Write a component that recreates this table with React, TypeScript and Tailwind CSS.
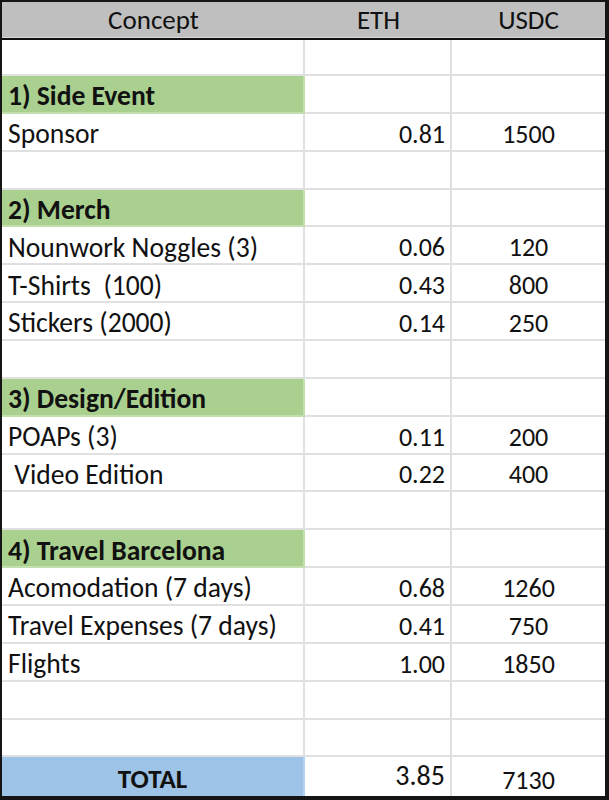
type Row =
  | { kind: "empty" }
  | { kind: "section"; label: string }
  | { kind: "item"; label: string; eth: string; usdc: string };

const rows: Row[] = [
  { kind: "empty" },
  { kind: "section", label: "1) Side Event" },
  { kind: "item", label: "Sponsor", eth: "0.81", usdc: "1500" },
  { kind: "empty" },
  { kind: "section", label: "2) Merch" },
  { kind: "item", label: "Nounwork Noggles (3)", eth: "0.06", usdc: "120" },
  { kind: "item", label: "T-Shirts  (100)", eth: "0.43", usdc: "800" },
  { kind: "item", label: "Stickers (2000)", eth: "0.14", usdc: "250" },
  { kind: "empty" },
  { kind: "section", label: "3) Design/Edition" },
  { kind: "item", label: "POAPs (3)", eth: "0.11", usdc: "200" },
  { kind: "item", label: " Video Edition", eth: "0.22", usdc: "400" },
  { kind: "empty" },
  { kind: "section", label: "4) Travel Barcelona" },
  { kind: "item", label: "Acomodation (7 days)", eth: "0.68", usdc: "1260" },
  { kind: "item", label: "Travel Expenses (7 days)", eth: "0.41", usdc: "750" },
  { kind: "item", label: "Flights", eth: "1.00", usdc: "1850" },
  { kind: "empty" },
  { kind: "empty" },
];

const font = { fontFamily: "Calibri, Carlito, Lato, 'Liberation Sans', sans-serif" };

export default function App() {
  return (
    <div
      className="flex h-[800px] w-[609px] flex-col border-t-2 border-r-4 border-b-4 border-l-2 border-[#151515] bg-white text-[27px] text-[#111]"
      style={font}
    >
      {/* header */}
      <div className="flex h-[38px] shrink-0 border-b-2 border-[#111] bg-[#bfbfbf] leading-none shadow-[inset_0_-1px_0_#dadada]">
        <div className="flex w-[303px] items-end justify-center pb-[5px]">Concept</div>
        <div className="flex w-[147px] items-end justify-center pb-[5px]">ETH</div>
        <div className="flex flex-1 items-end justify-center pb-[5px]">USDC</div>
      </div>

      {rows.map((r, i) => {
        const h = i === 0 ? "h-[36px]" : "h-[37.86px]";
        const isSection = r.kind === "section";
        return (
          <div key={i} className={`flex shrink-0 leading-none ${h}`}>
            <div
              className={`flex w-[303px] items-end whitespace-pre border-r-2 border-b-2 pb-[2px] pl-[6px] text-[27.6px] ${
                isSection ? "border-[#c3dfae] bg-[#a9d08e] font-bold" : "border-[#e0e0e0]"
              }`}
            >
              {r.kind !== "empty" ? r.label : ""}
            </div>
            <div className="flex w-[147px] items-end justify-end border-r-2 border-b-2 border-[#e0e0e0] pr-[5px] pb-[3px] text-[26px]">
              {r.kind === "item" ? r.eth : ""}
            </div>
            <div className="flex flex-1 items-end justify-center border-b-2 border-[#e0e0e0] pb-[3px] text-[26px]">
              {r.kind === "item" ? r.usdc : ""}
            </div>
          </div>
        );
      })}

      {/* total */}
      <div className="flex flex-1 leading-none">
        <div className="flex w-[303px] items-end justify-center border-r-2 border-[#b5d2ee] bg-[#9dc3e6] pb-[4px] font-bold">
          TOTAL
        </div>
        <div className="flex w-[147px] items-end justify-end border-r-2 border-[#e0e0e0] pr-[5px] pb-[6px] text-[28px]">
          3.85
        </div>
        <div className="flex flex-1 items-end justify-center pb-[3px] text-[26px]">7130</div>
      </div>
    </div>
  );
}
